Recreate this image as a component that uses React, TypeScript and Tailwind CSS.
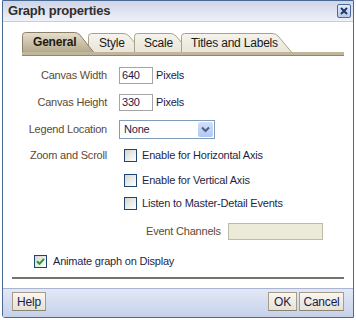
import * as React from "react";

const tabs = [
  { label: "General", w: 72, ml: 0, pl: 11, active: true },
  { label: "Style", w: 55, ml: -6, pl: 11, active: false },
  { label: "Scale", w: 56, ml: -9, pl: 10, active: false },
  { label: "Titles and Labels", w: 111, ml: -9, pl: 10, active: false },
];

function TabShape({ w, active, id }: { w: number; active: boolean; id: string }) {
  const h = 20;
  const top = active ? 0.5 : 1.5;
  const s = 17;
  const outline = `M0.5,${h} V${top + 3} Q0.5,${top} 3.5,${top} H${w - s - 3} Q${w - s + 1},${top} ${w - s + 3},${top + 2.5} L${w - 0.5},${h}`;
  return (
    <svg className="absolute inset-0" width={w} height={h} viewBox={`0 0 ${w} ${h}`}>
      <defs>
        <linearGradient id={id} x1="0" y1="0" x2="0" y2="1">
          <stop offset="0" stopColor={active ? "#e6dfcf" : "#f5f3ec"} />
          <stop offset="1" stopColor={active ? "#b5a98b" : "#e9e5d9"} />
        </linearGradient>
      </defs>
      <path d={`${outline} Z`} fill={`url(#${id})`} />
      <path d={outline} fill="none" stroke={active ? "#8c8067" : "#a9a28b"} strokeWidth="1" />
    </svg>
  );
}

function Check({ checked }: { checked?: boolean }) {
  return (
    <span className="flex h-[13px] w-[13px] shrink-0 items-center justify-center border border-[#1d4572] bg-linear-to-br from-[#d6d6d0] to-white">
      {checked && (
        <svg width="9" height="9" viewBox="0 0 9 9">
          <path d="M1 4.2 L3.5 6.8 L8 1.8" stroke="#22a022" strokeWidth="2" fill="none" />
        </svg>
      )}
    </span>
  );
}

function Field({ value, w }: { value: string; w: string }) {
  return (
    <div className={`flex h-[17px] items-center border border-[#a4a4a4] bg-white pl-[2px] text-[#1b1b48] ${w}`}>
      {value}
    </div>
  );
}

function Btn({ children, w }: { children: React.ReactNode; w: string }) {
  return (
    <button
      type="button"
      className={`flex h-[19px] items-center justify-center border border-[#a59d88] border-b-[#8a8370] bg-linear-to-b from-[#f8f6f0] to-[#e6e2d6] text-[12px] text-[#1b1b48] ${w}`}
    >
      {children}
    </button>
  );
}

export default function App() {
  return (
    <div className="h-[320px] w-[356px] bg-white font-['Liberation_Sans',Arial,sans-serif] text-[11px] tracking-[-0.2px]">
      <div className="ml-[2px] flex h-[318px] w-[352px] flex-col rounded-bl-[3px] border border-[#4a6a96] bg-white">
        {/* title bar */}
        <div className="flex h-[21px] shrink-0 items-center justify-between border-b border-[#c6cde0] bg-linear-to-b from-[#cfd5e8] to-[#eff1f8] pl-[5px] pr-[2px]">
          <span className="text-[13px] font-bold text-[#2e2e2e]">Graph properties</span>
          <span className="flex h-[14px] w-[14px] items-center justify-center rounded-[2px] border border-[#4a6b98] bg-linear-to-b from-[#e3ebf9] to-[#b9cbea]">
            <svg width="8" height="8" viewBox="0 0 8 8">
              <path d="M1 1 L7 7 M7 1 L1 7" stroke="#1e3a68" strokeWidth="2" />
            </svg>
          </span>
        </div>

        {/* body */}
        <div className="flex flex-1 flex-col">
          <div className="ml-[19px] mt-[10px] w-[322px]">
            <div className="flex h-[20px]">
              {tabs.map((t, i) => (
                <div
                  key={t.label}
                  className={`relative flex h-[20px] shrink-0 items-center ${t.active ? "z-10 font-bold text-[#1d1a12]" : "pt-[1px] text-[#1a1a1a]"}`}
                  style={{ width: t.w, marginLeft: t.ml }}
                >
                  <TabShape w={t.w} active={t.active} id={`tab-grad-${i}`} />
                  <span className="relative text-[12px]" style={{ paddingLeft: t.pl }}>
                    {t.label}
                  </span>
                </div>
              ))}
            </div>
            <div className="h-[4px] border-b border-[#8e8670] bg-[#bfb69c]" />
          </div>

          <div className="mt-[11px] flex h-[17px] items-center">
            <span className="w-[104px] text-right text-[#5c4a35]">Canvas Width</span>
            <div className="ml-[12px] flex items-center">
              <Field value="640" w="w-[34px]" />
              <span className="ml-[3px] text-[#1b1b48]">Pixels</span>
            </div>
          </div>

          <div className="mt-[10px] flex h-[17px] items-center">
            <span className="w-[104px] text-right text-[#5c4a35]">Canvas Height</span>
            <div className="ml-[12px] flex items-center">
              <Field value="330" w="w-[34px]" />
              <span className="ml-[3px] text-[#1b1b48]">Pixels</span>
            </div>
          </div>

          <div className="mt-[9px] flex h-[19px] items-center">
            <span className="w-[104px] text-right text-[#5c4a35]">Legend Location</span>
            <div className="ml-[12px] flex h-[19px] w-[96px] items-center justify-between border border-[#7f9db9] bg-white pl-[4px] pr-[1px] text-[#1b1b48]">
              <span>None</span>
              <span className="flex h-[15px] w-[15px] items-center justify-center rounded-[2px] bg-linear-to-b from-[#d2defb] to-[#b3c8f5]">
                <svg width="9" height="7" viewBox="0 0 9 7">
                  <path d="M1 1.5 L4.5 5 L8 1.5" stroke="#4d6185" strokeWidth="2" fill="none" />
                </svg>
              </span>
            </div>
          </div>

          <div className="mt-[10px] flex h-[13px] items-center">
            <span className="w-[104px] text-right text-[#5c4a35]">Zoom and Scroll</span>
            <div className="ml-[17px] flex items-center">
              <Check />
              <span className="ml-[5px] text-[#1f1f46]">Enable for Horizontal Axis</span>
            </div>
          </div>

          <div className="mt-[12px] flex h-[13px] items-center pl-[121px]">
            <Check />
            <span className="ml-[5px] text-[#1f1f46]">Enable for Vertical Axis</span>
          </div>

          <div className="mt-[10px] flex h-[13px] items-center pl-[121px]">
            <Check />
            <span className="ml-[5px] text-[#1f1f46]">Listen to Master-Detail Events</span>
          </div>

          <div className="mt-[13px] flex h-[17px] items-center pl-[143px]">
            <span className="text-[#5c4a35]">Event Channels</span>
            <div className="ml-[7px] h-[17px] w-[95px] border border-[#bdbaa8] bg-[#ecead9]" />
          </div>

          <div className="mt-[15px] flex h-[13px] items-center pl-[31px]">
            <Check checked />
            <span className="ml-[6px] text-[#1f1f46]">Animate graph on Display</span>
          </div>

          <div className="ml-[9px] mt-[9px] h-[2px] w-[332px] bg-[#76746d]" />
        </div>

        {/* footer */}
        <div className="flex h-[29px] shrink-0 items-start justify-between border-t border-[#aab6d1] bg-linear-to-b from-[#e2e8f6] to-[#c6d1e9] px-[9px] pt-[3px]">
          <Btn w="w-[34px]">Help</Btn>
          <div className="flex gap-[2px]">
            <Btn w="w-[29px]">OK</Btn>
            <Btn w="w-[45px]">Cancel</Btn>
          </div>
        </div>
      </div>
    </div>
  );
}
